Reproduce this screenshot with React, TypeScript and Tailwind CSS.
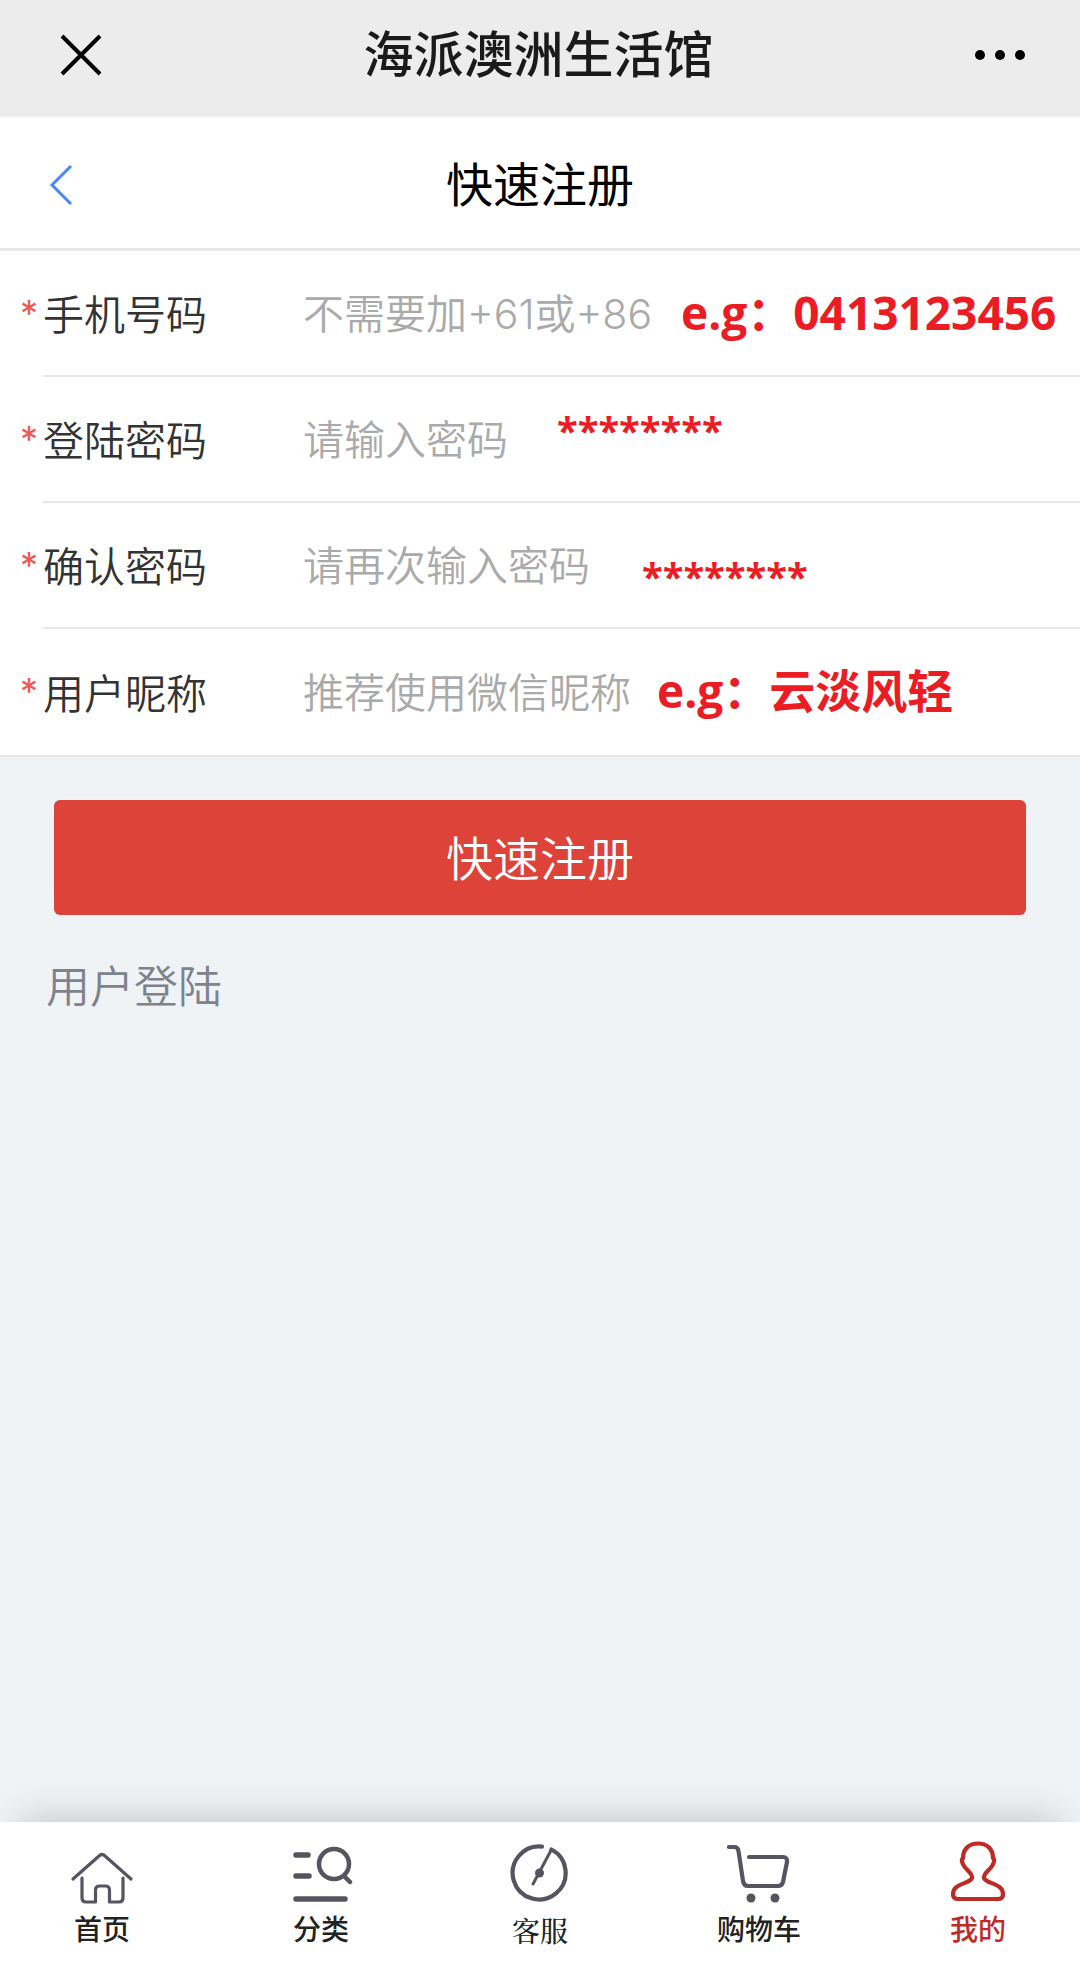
import type { ReactNode } from 'react';

type Field = {
    id: string;
    label: string;
    type: string;
    placeholder: string;
    note: string;
    noteClass: string;
};

const fields: Field[] = [
    { id: 'phone', label: '手机号码', type: 'tel', placeholder: '不需要加+61或+86', note: 'e.g：0413123456', noteClass: 'left-[681px] top-7 text-[46px]' },
    { id: 'password', label: '登陆密码', type: 'password', placeholder: '请输入密码', note: '********', noteClass: 'left-[557px] top-5 text-[38px]' },
    { id: 'confirm', label: '确认密码', type: 'password', placeholder: '请再次输入密码', note: '********', noteClass: 'left-[642px] top-10 text-[38px]' },
    { id: 'nickname', label: '用户昵称', type: 'text', placeholder: '推荐使用微信昵称', note: 'e.g：云淡风轻', noteClass: 'left-[657px] top-7 text-[46px]' },
];

function Icon({ children }: { children: ReactNode }) {
    return (
        <svg viewBox="0 0 64 64" className="size-16" fill="none" stroke="currentColor" strokeLinecap="round" strokeLinejoin="round" aria-hidden="true">
            {children}
        </svg>
    );
}

const tabs = [
    {
        label: '首页',
        font: 'font-medium',
        icon: (
            <Icon>
                <g strokeWidth="3.2">
                    <path d="M3 39 L29 16 Q32 13 35 16 L61 39" />
                    <path d="M12 38 V58 Q12 62 16 62 H25.5 V50 Q25.5 46 29.5 46 H35.5 Q39.5 46 39.5 50 V62 H49 Q53 62 53 58 V38" />
                </g>
            </Icon>
        ),
    },
    {
        label: '分类',
        font: 'font-medium',
        icon: (
            <Icon>
                <path d="M7 15 H19 M7 36 H20 M7 59 H56" strokeWidth="5.5" />
                <circle cx="45" cy="24" r="15" strokeWidth="4.5" />
                <path d="M55 36 L61 42" strokeWidth="4.5" />
            </Icon>
        ),
    },
    {
        label: '客服',
        font: "font-medium font-['Noto_Serif_CJK_SC','Noto_Sans_CJK_SC',serif]",
        icon: (
            <Icon>
                <path d="M43.5 9.5 A26.5 26.5 0 1 1 34 6.6" strokeWidth="4.2" />
                <path d="M43.5 9.5 L25 44" strokeWidth="3" />
                <circle cx="31.5" cy="33" r="4.5" fill="currentColor" stroke="none" />
            </Icon>
        ),
    },
    {
        label: '购物车',
        font: 'font-medium',
        icon: (
            <Icon>
                <path d="M2 7 H7 Q11 7 11.5 11 L16 41 Q17 46 21 46 H51 Q55 46 56 42 L60 22 Q60.5 17 56 17 H22" strokeWidth="4.2" />
                <circle cx="24" cy="58" r="4.5" fill="currentColor" stroke="none" />
                <circle cx="48" cy="58" r="4.5" fill="currentColor" stroke="none" />
            </Icon>
        ),
    },
    {
        label: '我的',
        font: 'font-medium',
        active: true,
        icon: (
            <Icon>
                <path
                    d="M32 3.5 C23 3.5 17 9 17 18 Q15 20 16.500 23 C18 29 27 33 26 38 C24 44 7 43 7 54 Q7 59 12 59 H52 Q57 59 57 54 C57 43 40 44 38 38 C37 33 46 29 47.5 23 Q49 20 47 18 C47 9 41 3.5 32 3.5 Z"
                    strokeWidth="4.2"
                />
            </Icon>
        ),
    },
];

export default function App() {
    return (
        <div className="min-h-screen flex flex-col bg-[#eff3f6] font-['Inter','Noto_Sans_CJK_SC',sans-serif]">
            {/* Title bar */}
            <header className="h-[117px] pb-2 pl-[60px] pr-[55px] flex items-center justify-between bg-[#ececec]">
                <button type="button" aria-label="关闭">
                    <svg viewBox="0 0 42 42" className="size-[42px]" stroke="#000" strokeWidth="4" aria-hidden="true">
                        <path d="M2 2 L40 40 M40 2 L2 40" />
                    </svg>
                </button>
                <h1 className="text-[50px] leading-[60px] font-medium text-[#1a1a1a]">海派澳洲生活馆</h1>
                <button type="button" aria-label="更多" className="flex gap-[10px]">
                    <span className="size-[10px] rounded-full bg-black"></span>
                    <span className="size-[10px] rounded-full bg-black"></span>
                    <span className="size-[10px] rounded-full bg-black"></span>
                </button>
            </header>

            {/* Page heading */}
            <div className="h-[134px] px-[49px] pt-1 grid grid-cols-[1fr_auto_1fr] items-center bg-white border-b-3 border-[#e8e8e8]">
                <a href="#back" aria-label="返回">
                    <svg viewBox="0 0 24 42" className="w-6 h-[42px]" fill="none" stroke="#4a87ee" strokeWidth="3" aria-hidden="true">
                        <path d="M22 2 L3 21 L22 40" />
                    </svg>
                </a>
                <h2 className="text-[47px] leading-[60px] text-black">快速注册</h2>
            </div>

            <form>
                <div className="bg-white border-b-2 border-[#e6e8ea]">
                    {fields.map((f, i) => (
                        <div key={f.id} className="relative flex pl-[43px]">
                            <span className="absolute left-5 top-8 text-[36px] leading-[60px] text-[#ee5a52]">*</span>
                            <div className={`flex flex-1 items-center h-[126px] pt-1 ${i < fields.length - 1 ? 'border-b-2 border-[#e8e8e8]' : ''}`}>
                                <label htmlFor={f.id} className="w-[260px] shrink-0 text-[41px] leading-[60px] font-[350] text-[#333]">{f.label}</label>
                                <input
                                    id={f.id}
                                    type={f.type}
                                    placeholder={f.placeholder}
                                    aria-describedby={`${f.id}-note`}
                                    className="flex-1 min-w-0 h-[60px] text-[41px] font-[350] text-[#333] placeholder:text-[#aaa] outline-none"
                                />
                            </div>
                            <span id={`${f.id}-note`} className={`absolute whitespace-nowrap leading-[66px] font-bold text-[#ec1c24] pointer-events-none font-['Open_Sans','Noto_Sans_CJK_SC',sans-serif] ${f.noteClass}`}>
                                {f.note}
                            </span>
                        </div>
                    ))}
                </div>
                <div className="px-[54px] pt-[43px]">
                    <button type="submit" className="w-full h-[115px] pt-0.5 rounded-md bg-[#dd4338] text-[47px] leading-[60px] font-[350] text-white">快速注册</button>
                </div>
            </form>
            <a href="#login" className="self-start ml-[46px] mt-[42px] text-[44px] leading-[60px] font-[350] text-[#7e828b]">用户登陆</a>

            {/* Bottom tabs */}
            <nav className="mt-auto h-[139px] pt-[18px] px-[60px] flex justify-between items-start bg-white shadow-[0_-20px_40px_-20px_rgba(0,0,0,0.22)]">
                {tabs.map((t) => (
                    <a key={t.label} href="#tab" className={`w-[84px] flex flex-col items-center gap-2.5 ${t.active ? 'text-[#c02a26]' : 'text-[#55555f]'}`}>
                        {t.icon}
                        <span className={`text-[28px] leading-8 whitespace-nowrap ${t.font} ${t.active ? '' : 'text-[#222]'}`}>{t.label}</span>
                    </a>
                ))}
            </nav>
        </div>
    );
}
